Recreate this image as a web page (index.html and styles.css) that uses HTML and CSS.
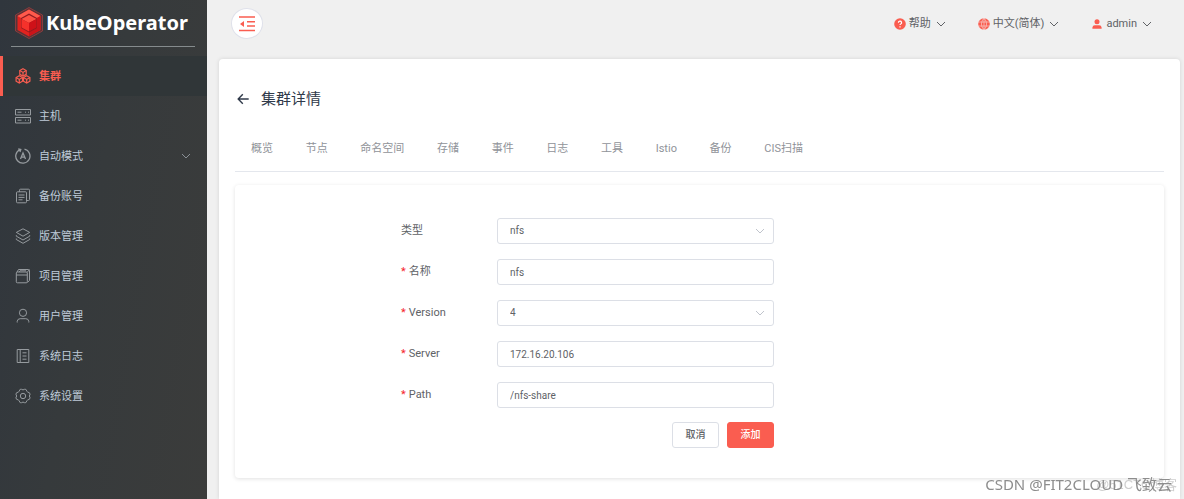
FILE: index.html
```html
<!DOCTYPE html>
<html lang="zh-CN">
<head>
<meta charset="utf-8">
<meta name="viewport" content="width=device-width, initial-scale=1">
<title>KubeOperator</title>
<link rel="stylesheet" href="styles.css">
</head>
<body>
<svg class="defs" aria-hidden="true">
  <symbol id="chevron" viewBox="0 0 10 10"><path d="M1 3l4 4 4-4" fill="none" stroke="currentColor"/></symbol>
</svg>
<div class="app">
  <aside class="sidebar">
    <div class="brand">
      <svg class="brand-mark" viewBox="0 0 28 32" aria-hidden="true">
        <path d="M14 .5L27.500 8v16L14 31.500.5 24V8z" fill="#5a3437" stroke="#9b3f40" stroke-width=".8"/>
        <path d="M14 2.500L25.500 9v14L14 29.500 2.500 23V9z" fill="#e2231f"/>
        <path d="M14 2.500L25.500 9 14 15.500 2.500 9z" fill="#ff5a4c"/>
        <path d="M25.500 9v14L14 29.500v-14z" fill="#c9141a"/>
        <path d="M14 6.500l8 4.500v10l-8 4.500L6 21V11z" fill="#8e1c20"/>
        <path d="M14 8l7.500 4L14 16l-7.500-4z" fill="#ff5143"/>
        <path d="M6.500 12L14 16v8.500l-7.500-4z" fill="#f5312b"/>
        <path d="M21.500 12L14 16v8.500l7.500-4z" fill="#cf1118"/>
      </svg>
      <span class="brand-name">KubeOperator</span>
    </div>
    <nav class="menu">
      <a class="menu-item active" href="#">
        <svg class="icon" viewBox="0 0 16 16"><g stroke-width="1.200"><path d="M8 .8l3.200 1.800v3.700L8 8.100 4.800 6.300V2.600zM4.300 7.800l3.200 1.800v3.600l-3.200 1.900-3.200-1.900V9.600zM11.700 7.800l3.200 1.800v3.600l-3.200 1.900-3.200-1.900V9.600z"/><path d="M4.800 2.600L8 4.400l3.200-1.800M8 4.400v3.700M1.100 9.600l3.200 1.800 3.200-1.800M4.300 11.400v3.700M8.500 9.600l3.200 1.800 3.200-1.800M11.700 11.400v3.700"/></g></svg>
        <span>集群</span></a>
      <a class="menu-item" href="#">
        <svg class="icon" viewBox="0 0 16 16"><path d="M.5 1.500h15v5.500H.5zM.5 9.500h15V15H.5zM2.500 4.200h4M2.500 12.200h4M10 4.200h1M13 4.200h1M10 12.200h1M13 12.200h1"/></svg>
        <span>主机</span></a>
      <a class="menu-item" href="#">
        <svg class="icon" viewBox="0 0 16 16"><g stroke-width="1.300"><path d="M9.500 1.200A7.100 7.100 0 1 1 5 1.600M3.200.8l2.600.6L5 4"/><path d="M5.500 11L8 5l2.500 6M6.400 9.200h3.200"/></g></svg>
        <span>自动模式</span><svg class="chevron"><use href="#chevron"/></svg></a>
      <a class="menu-item" href="#">
        <svg class="icon" viewBox="0 0 16 16"><path d="M2.500 3.800h8a1 1 0 0 1 1 1v9a1 1 0 0 1-1 1h-8a1 1 0 0 1-1-1v-9a1 1 0 0 1 1-1zM4.500 3.800V2.200a1 1 0 0 1 1-1h8a1 1 0 0 1 1 1v9.300a1 1 0 0 1-1 1h-2M3.500 7h6M3.500 9.400h6M3.500 11.800h4"/></svg>
        <span>备份账号</span></a>
      <a class="menu-item" href="#">
        <svg class="icon" viewBox="0 0 16 16"><path d="M8 .8l6.700 3.600L8 8.200 1.300 4.400zM1.300 7.200v1L8 12l6.700-3.800v-1M1.300 10.500v1L8 15.300l6.700-3.800v-1"/></svg>
        <span>版本管理</span></a>
      <a class="menu-item" href="#">
        <svg class="icon" viewBox="0 0 16 16"><path d="M2.300 4h9a1 1 0 0 1 1 1v8.800a1 1 0 0 1-1 1h-9a1 1 0 0 1-1-1V5a1 1 0 0 1 1-1zM1.300 7h11M2 4l1.500-2.500h10a1 1 0 0 1 1 1v10l-2 1.800M12 4.500l2.300-2.800M4 4l1-1.200h6"/></svg>
        <span>项目管理</span></a>
      <a class="menu-item" href="#">
        <svg class="icon" viewBox="0 0 16 16"><circle cx="8" cy="4.800" r="3.600"/><path d="M2.200 14.500v-1.200a3 3 0 0 1 3-2.600h5.600a3 3 0 0 1 3 2.600v1.200"/></svg>
        <span>用户管理</span></a>
      <a class="menu-item" href="#">
        <svg class="icon" viewBox="0 0 16 16"><path d="M2.200 1.500h11.600v13H2.200zM5.200 1.500v13M7.500 4.800h4M7.500 8h4M7.500 11.200h4"/></svg>
        <span>系统日志</span></a>
      <a class="menu-item" href="#">
        <svg class="icon" viewBox="0 0 16 16"><circle cx="8" cy="8" r="2.700"/><path d="M5.200 1.300h1.400q1.400 1.300 2.800 0h1.400l1.200 2q.4 1.300 2.200 1.200l.9 1.600q-1.500 1.900 0 3.800l-.9 1.600q-1.800-.1-2.200 1.200l-1.200 2H9.400q-1.400-1.300-2.800 0H5.200l-1.200-2q-.4-1.300-2.200-1.200L.9 9.900q1.500-1.900 0-3.800l.9-1.600Q3.600 4.600 4 3.300z"/></svg>
        <span>系统设置</span></a>
    </nav>
  </aside>

  <div class="page">
    <header class="topbar">
      <button class="collapse" type="button" aria-label="收起菜单">
        <svg viewBox="0 0 16 16" aria-hidden="true"><path d="M0 1h16M8 5.700h8M8 10h8M0 14.500h16" fill="none" stroke="currentColor" stroke-width="1.600"/><path d="M5 5v6L1 8z" fill="currentColor"/></svg>
      </button>
      <div class="topbar-actions">
        <button class="drop" type="button">
          <svg class="mark" viewBox="0 0 12 12" aria-hidden="true"><circle cx="6" cy="6" r="5.800" fill="currentColor"/><path d="M4.400 4.700a1.600 1.500 0 1 1 2.300 1.300Q6 6.400 6 7M6 8.200v1.300" fill="none" stroke="#fff" stroke-width="1.200"/></svg>
          <span>帮助</span><svg class="chevron"><use href="#chevron"/></svg></button>
        <button class="drop" type="button">
          <svg class="mark" viewBox="0 0 12 12" aria-hidden="true"><circle cx="6" cy="6" r="5.800" fill="currentColor"/><path d="M6 0v12M0 4h12M0 8h12M6 0Q.8 6 6 12M6 0q5.200 6 0 12" fill="none" stroke="#f7dcd9" stroke-width=".6"/></svg>
          <span>中文(简体)</span><svg class="chevron"><use href="#chevron"/></svg></button>
        <button class="drop" type="button">
          <svg class="mark" viewBox="0 0 12 12" aria-hidden="true"><circle cx="6" cy="3.700" r="2.500" fill="currentColor"/><path d="M1.400 10.800V9.500a2.500 2.500 0 0 1 2.500-2.300h4.200a2.500 2.500 0 0 1 2.500 2.300v1.300z" fill="currentColor"/></svg>
          <span>admin</span><svg class="chevron"><use href="#chevron"/></svg></button>
      </div>
    </header>

    <main class="panel">
      <div class="heading">
        <a class="back" href="#" aria-label="返回"><svg viewBox="0 0 12 12" aria-hidden="true"><path d="M5.800 1.300L1.200 6l4.600 4.700M1.200 6h10.500" fill="none" stroke="currentColor" stroke-width="1.400"/></svg></a>
        <h1>集群详情</h1>
      </div>
      <nav class="tabs">
        <div class="tab-list">
          <a href="#">概览</a><a href="#">节点</a><a href="#">命名空间</a><a href="#">存储</a><a href="#">事件</a><a href="#">日志</a><a href="#">工具</a><a href="#">Istio</a><a href="#">备份</a><a href="#">CIS扫描</a>
        </div>
      </nav>
      <section class="card">
        <form class="form">
          <div class="row">
            <label for="type">类型</label>
            <div class="field"><select id="type"><option>nfs</option></select><svg class="chevron"><use href="#chevron"/></svg></div>
          </div>
          <div class="row">
            <label class="required" for="name">名称</label>
            <div class="field"><input id="name" type="text" value="nfs"></div>
          </div>
          <div class="row">
            <label class="required" for="version">Version</label>
            <div class="field"><select id="version"><option>4</option></select><svg class="chevron"><use href="#chevron"/></svg></div>
          </div>
          <div class="row">
            <label class="required" for="server">Server</label>
            <div class="field"><input id="server" type="text" value="172.16.20.106"></div>
          </div>
          <div class="row">
            <label class="required" for="path">Path</label>
            <div class="field"><input id="path" type="text" value="/nfs-share"></div>
          </div>
          <div class="buttons">
            <button class="btn" type="button">取消</button>
            <button class="btn primary" type="button">添加</button>
          </div>
        </form>
      </section>
    </main>
  </div>
</div>
<div class="watermark site">@51CTO博客</div>
<div class="watermark author">CSDN @FIT2CLOUD 飞致云</div>
</body>
</html>
```
FILE: styles.css
```css
* { box-sizing: border-box; }
body {
  margin: 0;
  font: 11px/16px Roboto, "Noto Sans CJK SC", sans-serif;
  color: #606266;
  background: #f0f0f0;
}
a { color: inherit; text-decoration: none; }
button, input, select { font: inherit; color: inherit; margin: 0; }
.defs { display: none; }
.chevron { width: 10px; height: 10px; flex: none; }

.app { display: flex; height: 100vh; overflow: hidden; }

.sidebar {
  width: 207px;
  flex: none;
  background: linear-gradient(100deg, #30363d 0%, #363a3c 45%, #3b3c3b 100%);
}
.brand {
  display: flex;
  align-items: center;
  gap: 3px;
  height: 47px;
  margin: 0 12px 9px 11px;
  padding-left: 4px;
  border-bottom: 1px solid #858b8d;
}
.brand-mark { width: 28px; height: 32px; flex: none; }
.brand-name {
  font: bold 20px/32px "Noto Sans", "Open Sans", sans-serif;
  color: #fff;
}
.menu-item {
  display: flex;
  align-items: center;
  gap: 8px;
  height: 40px;
  padding: 0 16px 0 15px;
  color: #bfcbd9;
}
.menu-item span { padding-top: 2px; }
.menu-item.active {
  background: #303638;
  border-left: 3px solid #fa5d50;
  padding-left: 12px;
  color: #fa5d50;
  font-weight: bold;
}
.icon { width: 16px; height: 16px; fill: none; stroke: #969b9f; }
.active .icon { stroke: currentColor; }
.menu-item .chevron { margin-left: auto; color: #8a9096; }

.page { display: flex; flex-direction: column; flex: 1; min-width: 0; }
.topbar {
  display: flex;
  align-items: center;
  justify-content: space-between;
  height: 47px;
  flex: none;
  margin-bottom: 12px;
  padding: 0 32px 0 24px;
}
.collapse {
  display: grid;
  place-items: center;
  width: 32px;
  height: 31px;
  padding: 0;
  border: 1px solid #dfe1ea;
  border-radius: 50%;
  background: #fff;
  color: #fa5d50;
}
.collapse svg { width: 16px; height: 16px; }
.topbar-actions { display: flex; gap: 32px; }
.drop {
  display: flex;
  align-items: center;
  gap: 3px;
  padding: 0;
  border: 0;
  background: none;
}
.mark { width: 12px; height: 12px; color: #fa5d50; }
.drop .chevron { margin-left: 2px; }

.panel {
  flex: 1;
  margin: 0 4px 0 12px;
  padding: 28px 16px 0;
  background: #fff;
  border-radius: 4px 4px 0 0;
  box-shadow: 0 0 4px rgba(0, 0, 0, .12);
}
.heading { display: flex; align-items: center; gap: 12px; height: 24px; color: #303a4a; }
.back { display: flex; padding-left: 2px; }
.back svg { width: 12px; height: 12px; }
h1 { margin: 0; font-size: 15px; line-height: 24px; font-weight: normal; }
.tabs { margin-top: 12px; padding: 18px 16px 14px; border-bottom: 1px solid #e4e7ed; color: #909399; }
.tab-list { display: flex; justify-content: space-between; max-width: 552px; }

.card {
  display: grid;
  grid-template-columns: 166fr 373fr 390fr;
  margin-top: 13px;
  padding: 33px 0 30px;
  border-radius: 4px;
  box-shadow: 0 1px 4px rgba(0, 0, 0, .12);
}
.form { grid-column: 2; }
.row { display: grid; grid-template-columns: 96px 1fr; align-items: center; margin-bottom: 15px; }
.row:nth-last-child(2) { margin-bottom: 14px; }
.required::before { content: "*"; margin-right: 3px; color: #f5222d; }
.field { position: relative; display: flex; }
.field input, .field select {
  width: 100%;
  height: 26px;
  padding: 0 12px;
  border: 1px solid #dcdfe6;
  border-radius: 3px;
  background: #fff;
  font-size: 10px;
  appearance: none;
}
.field .chevron { position: absolute; right: 9px; top: 8px; color: #c0c4cc; pointer-events: none; }
.buttons { display: flex; justify-content: flex-end; gap: 8px; }
.btn {
  width: 47px;
  height: 26px;
  padding: 0;
  border: 1px solid #dcdfe6;
  border-radius: 3px;
  background: #fff;
  font-size: 10px;
  font-weight: 500;
}
.btn.primary { border-color: #fa5d50; background: #fa5d50; color: #fff; }

.watermark { position: fixed; white-space: nowrap; pointer-events: none; }
.author {
  right: 12px;
  bottom: 3px;
  font: 15px/24px "Noto Sans", "Noto Sans CJK SC", sans-serif;
  color: #8d8d8d;
}
.site {
  right: 7px;
  bottom: 5px;
  font: 13px/18px "Liberation Sans", "Noto Sans CJK SC", sans-serif;
  color: #cfcfcf;
}
```
